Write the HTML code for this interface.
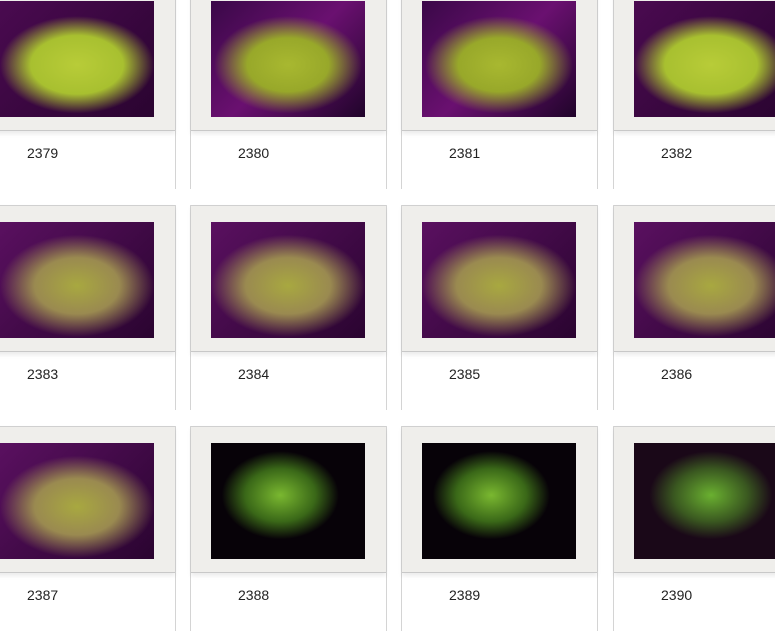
<!DOCTYPE html>
<html><head><style>
body{margin:0;width:775px;height:625px;overflow:hidden;background:#fff;font-family:"Liberation Sans",sans-serif;position:relative}
.card{position:absolute;width:197px;height:205px;border-left:1px solid #d4d4d4;border-right:1px solid #d4d4d4;box-sizing:border-box}
.panel{position:absolute;left:0;top:0;right:0;height:147px;background:#efeeeb;border-top:1px solid #d0d0d0;border-bottom:1px solid #c8c8c8;box-sizing:border-box;box-shadow:0 3px 4px rgba(0,0,0,.08)}
.img{position:absolute;left:20px;top:16px;width:154px;height:116px;background:#2a0630}
.lbl{position:absolute;left:47px;top:161px;font-size:14px;color:#222}
.p .img{background:radial-gradient(ellipse 48% 42% at 50% 55%,#a8b830 0%,#98a82a 55%,rgba(120,40,120,0) 100%),linear-gradient(135deg,#3a0848,#6a1070 50%,#20042a)}
.y .img{background:radial-gradient(ellipse 50% 42% at 50% 55%,#b8cc38 0%,#a8c030 60%,rgba(0,0,0,0) 100%),linear-gradient(135deg,#4a0a50,#2a0430)}
.m .img{background:radial-gradient(ellipse 50% 44% at 50% 55%,#a8a840 0%,#9a8a50 55%,rgba(0,0,0,0) 100%),linear-gradient(135deg,#5a1060,#2a0430)}
.g .img{background:radial-gradient(ellipse 38% 38% at 45% 45%,#7ab830 0%,#3a6818 60%,rgba(0,0,0,0) 100%),#070208}
</style></head><body>
<div class="card y" style="left:-21px;top:-16px"><div class="panel"><div class="img"></div></div><div class="lbl">2379</div></div>
<div class="card p" style="left:190px;top:-16px"><div class="panel"><div class="img"></div></div><div class="lbl">2380</div></div>
<div class="card p" style="left:401px;top:-16px"><div class="panel"><div class="img"></div></div><div class="lbl">2381</div></div>
<div class="card y" style="left:613px;top:-16px"><div class="panel"><div class="img"></div></div><div class="lbl">2382</div></div>
<div class="card m" style="left:-21px;top:205px"><div class="panel"><div class="img"></div></div><div class="lbl">2383</div></div>
<div class="card m" style="left:190px;top:205px"><div class="panel"><div class="img"></div></div><div class="lbl">2384</div></div>
<div class="card m" style="left:401px;top:205px"><div class="panel"><div class="img"></div></div><div class="lbl">2385</div></div>
<div class="card m" style="left:613px;top:205px"><div class="panel"><div class="img"></div></div><div class="lbl">2386</div></div>
<div class="card m" style="left:-21px;top:426px"><div class="panel"><div class="img"></div></div><div class="lbl">2387</div></div>
<div class="card g" style="left:190px;top:426px"><div class="panel"><div class="img"></div></div><div class="lbl">2388</div></div>
<div class="card g" style="left:401px;top:426px"><div class="panel"><div class="img"></div></div><div class="lbl">2389</div></div>
<div class="card g" style="left:613px;top:426px"><div class="panel"><div class="img" style="background:radial-gradient(ellipse 40% 38% at 50% 45%,#6ab030 0%,#3a5820 60%,rgba(0,0,0,0) 100%),#1a0818"></div></div><div class="lbl">2390</div></div>
</body></html>
